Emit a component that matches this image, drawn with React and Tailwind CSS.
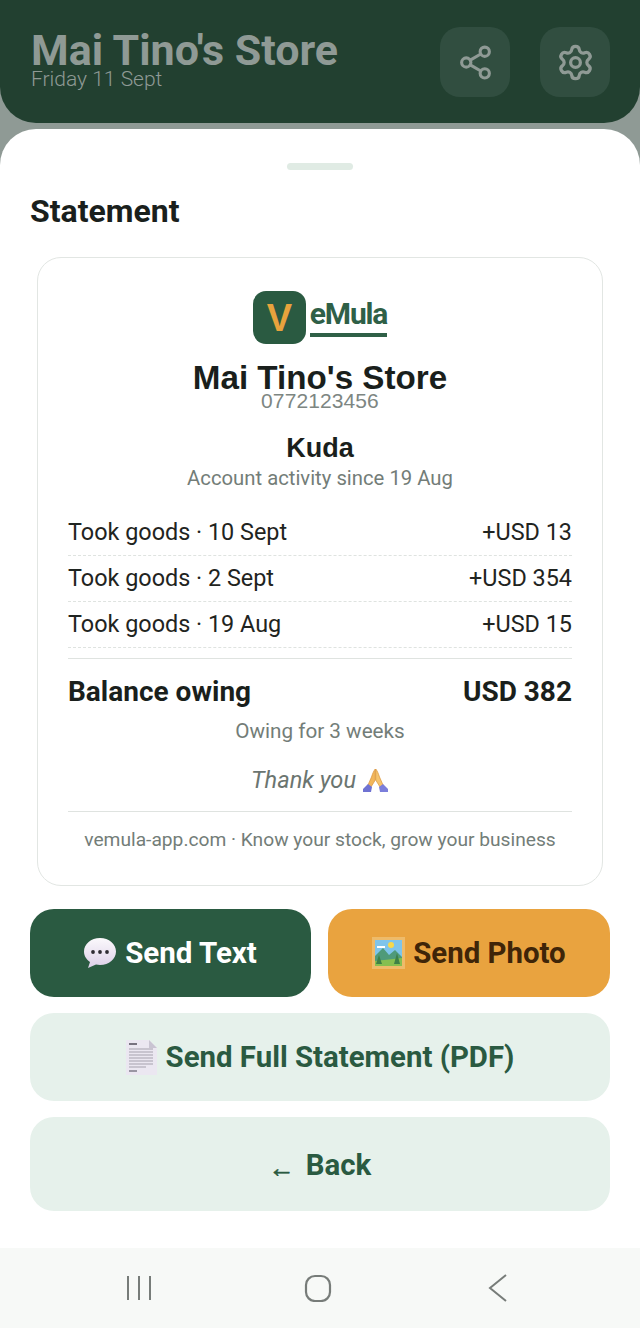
import { Share2, Settings } from "lucide-react";

const rows = [
  { label: "Took goods · 10 Sept", amount: "+USD 13" },
  { label: "Took goods · 2 Sept", amount: "+USD 354" },
  { label: "Took goods · 19 Aug", amount: "+USD 15" },
];

function PrayIcon() {
  return (
    <svg width="27" height="25" viewBox="0 0 27 25">
      <path d="M13.300 1 C11.500 3 10.500 6 9.500 9 L6 17 L9 19 L13.300 12 Z" fill="#f2b65a" stroke="#d9923a" strokeWidth="0.7" />
      <path d="M13.700 1 C15.500 3 16.500 6 17.500 9 L21 17 L18 19 L13.700 12 Z" fill="#f5c36c" stroke="#d9923a" strokeWidth="0.7" />
      <path d="M6 16 L1 21 L1 24 L9 24 L10 19 Z" fill="#6f72d2" />
      <path d="M21 16 L26 21 L26 24 L18 24 L17 19 Z" fill="#7b7edb" />
    </svg>
  );
}

function BubbleIcon() {
  return (
    <svg width="32" height="30" viewBox="0 0 32 30">
      <defs>
        <linearGradient id="bubbleFill" x1="0" y1="0" x2="0" y2="1">
          <stop offset="0" stopColor="#fbf9fc" />
          <stop offset="1" stopColor="#dccfe8" />
        </linearGradient>
      </defs>
      <path d="M16 0 C7 0 0 6 0 13.5 C0 18 2.500 21.500 6 24 L4 30 L12 26.500 C13.300 26.800 14.600 27 16 27 C25 27 32 21 32 13.500 C32 6 25 0 16 0 Z" fill="url(#bubbleFill)" />
      <circle cx="9" cy="14" r="1.900" fill="#2e2b33" />
      <circle cx="16" cy="14" r="1.900" fill="#2e2b33" />
      <circle cx="23" cy="14" r="1.900" fill="#2e2b33" />
    </svg>
  );
}

function PictureIcon() {
  return (
    <svg width="33" height="32" viewBox="0 0 33 32">
      <rect width="33" height="32" fill="#eebb6a" />
      <rect x="3" y="3" width="27" height="26" fill="#7fc4ea" />
      <circle cx="19" cy="8" r="3" fill="#f8d84a" />
      <path d="M5 9 H13 V11 H5 Z" fill="#ffffff" />
      <path d="M3 19 L11 11 L17 18 L23 13 L30 20 V29 H3 Z" fill="#4f9a7a" />
      <path d="M3 24 L30 21 V29 H3 Z" fill="#86bf50" />
      <path d="M25 16 L28 27 H22 Z" fill="#3d8046" />
      <path d="M7 18 L10 27 H4 Z" fill="#3d8046" />
    </svg>
  );
}

function DocIcon() {
  return (
    <svg width="31" height="35" viewBox="0 0 31 35">
      <path d="M0 0 L23 0 L31 8 L31 35 L0 35 Z" fill="#ebe7f1" />
      <path d="M23 0 L23 8 L31 8 Z" fill="#c9c4d2" />
      <path d="M3 9 H27 M3 12 H27 M3 15 H27 M3 18 H27 M3 21 H27 M3 24 H27 M3 27 H20" stroke="#a5a1ad" strokeWidth="1" />
      <rect x="3" y="3" width="8" height="2" fill="#77737f" />
      <rect x="3" y="30" width="8" height="2" fill="#9a96a3" />
    </svg>
  );
}

export default function App() {
  return (
    <div className="w-[640px] h-[1328px] flex flex-col bg-[#8f9a95] font-['Roboto',sans-serif] overflow-hidden">

      {/* Header */}
      <div className="h-[123px] shrink-0 flex justify-between bg-[#224030] rounded-b-[36px] pl-[31px] pr-[30px] pt-[27px]">
        <div className="pt-[3px]">
          <h1 className="text-[43px] leading-[40px] font-bold text-[#8f9a95]">Mai Tino's Store</h1>
          <p className="text-[21px] leading-[18px] text-[#8f9a95] font-light">Friday 11 Sept</p>
        </div>
        <div className="flex gap-[30px]">
          <div className="w-[70px] h-[70px] rounded-[20px] bg-[#314e40] flex items-center justify-center">
            <Share2 size={37} strokeWidth={2} className="text-[#8f9a95]" />
          </div>
          <div className="w-[70px] h-[70px] rounded-[20px] bg-[#314e40] flex items-center justify-center">
            <Settings size={39} strokeWidth={2} className="text-[#8f9a95]" />
          </div>
        </div>
      </div>

      {/* Sheet */}
      <div className="mt-[6px] h-[1119px] shrink-0 bg-white rounded-t-[36px] px-[30px] pt-[34px]">
        <div className="w-[66px] h-[7px] mx-auto rounded-full bg-[#e0ebe4]" />
        <h2 className="mt-[23px] text-[32px] leading-[36px] font-bold text-[#1a1f1c]">Statement</h2>

        {/* Card */}
        <div className="mt-[28px] mx-[7px] h-[629px] border border-[#e2e6e3] rounded-[24px] px-[30px] pt-[33px]">
          <div className="flex justify-center items-start gap-[4px]">
            <div className="w-[53px] h-[53px] rounded-[13px] bg-[#2a5a41] flex items-center justify-center font-['Liberation_Sans',sans-serif] font-bold text-[38px] leading-[50px] text-[#e8a33d]">V</div>
            <div className="pt-[5px]">
              <div className="text-[30px] leading-[36px] font-bold tracking-[-1.2px] text-[#2f6047]">eMula</div>
              <div className="h-[4px] mt-[1px] bg-[#2f6047]" />
            </div>
          </div>

          <div className="text-center font-['Liberation_Sans',sans-serif]">
            <div className="mt-[14px] text-[33.2px] leading-[40px] font-bold text-[#1a1f1c]">Mai Tino's Store</div>
            <div className="-mt-[6px] text-[21px] leading-[18px] tracking-[0.1px] text-[#7d8682]">0772123456</div>
            <div className="mt-[22px] text-[27px] leading-[32px] font-bold text-[#1a1f1c]">Kuda</div>
          </div>
          <div className="text-center text-[20.3px] leading-[28px] text-[#737d78]">Account activity since 19 Aug</div>

          {/* Rows */}
          <div className="mt-[18px]">
            {rows.map((row) => (
              <div key={row.label} className="h-[46px] flex justify-between items-center border-b border-dashed border-[#dfe3e0] text-[23.4px] text-[#1f2421]">
                <span>{row.label}</span>
                <span>{row.amount}</span>
              </div>
            ))}
          </div>

          <div className="mt-[10px] border-t border-[#dfe3e0] pt-[16px] flex justify-between text-[28px] leading-[34px] font-bold text-[#1a1f1c]">
            <span>Balance owing</span>
            <span>USD 382</span>
          </div>
          <div className="mt-[8px] text-center text-[20.7px] leading-[28px] text-[#737d78]">Owing for 3 weeks</div>
          <div className="mt-[20px] flex justify-center items-center gap-[6px] text-[23.6px] leading-[30px] italic text-[#6b7570]">
            <span>Thank you</span>
            <PrayIcon />
          </div>
          <div className="mt-[16px] border-t border-[#dfe3e0] pt-[15px] text-center text-[19.2px] leading-[26px] text-[#737d78]">
            vemula-app.com · Know your stock, grow your business
          </div>
        </div>

        {/* Buttons */}
        <div className="mt-[23px] flex gap-[17px]">
          <button className="w-[281px] h-[88px] rounded-[24px] bg-[#2a5a41] flex items-center justify-center gap-[9px] text-[29.5px] font-bold text-white">
            <BubbleIcon />
            Send Text
          </button>
          <button className="w-[282px] h-[88px] rounded-[24px] bg-[#e9a33f] flex items-center justify-center gap-[8px] text-[29.4px] font-bold text-[#3f2508]">
            <PictureIcon />
            Send Photo
          </button>
        </div>
        <button className="mt-[16px] w-full h-[88px] rounded-[24px] bg-[#e6f1eb] flex items-center justify-center gap-[9px] text-[29.4px] font-bold text-[#2a5a41]">
          <DocIcon />
          Send Full Statement (PDF)
        </button>
        <button className="mt-[16px] w-full h-[94px] rounded-[24px] bg-[#e6f1eb] flex items-center justify-center gap-[11px] pt-[2px] text-[29.4px] font-bold text-[#2a5a41]">
          <span className="text-[26px] pt-[6px] [-webkit-text-stroke:0.6px_#2a5a41]">←</span>
          Back
        </button>
      </div>

      {/* Android nav bar */}
      <div className="h-[80px] shrink-0 bg-[#f7f9f7] flex items-center pl-[125px]">
        <svg width="28" height="28" viewBox="0 0 28 28" fill="none" stroke="#777c79" strokeWidth="2">
          <path d="M3 2 V26 M14 2 V26 M25 2 V26" />
        </svg>
        <svg width="28" height="28" viewBox="0 0 28 28" fill="none" stroke="#777c79" strokeWidth="2.2" className="ml-[151px]">
          <rect x="2" y="2" width="24" height="25" rx="9" />
        </svg>
        <svg width="22" height="30" viewBox="0 0 22 30" fill="none" stroke="#777c79" strokeWidth="2" className="ml-[155px]">
          <path d="M19 2 L3 15 L19 28" />
        </svg>
      </div>
    </div>
  );
}
